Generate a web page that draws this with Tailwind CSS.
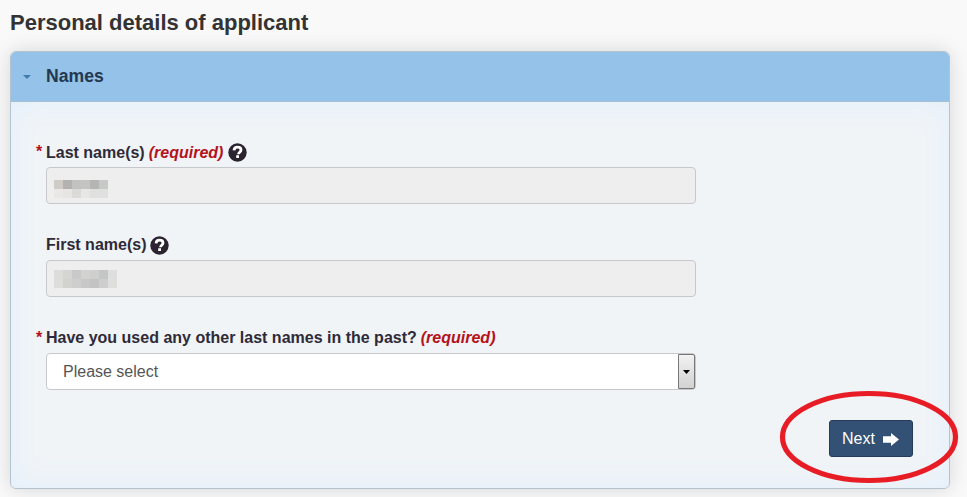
<!DOCTYPE html>
<html lang="en">
<head>
  <meta charset="UTF-8" />
  <meta name="viewport" content="width=device-width, initial-scale=1" />
  <title>Personal details of applicant</title>
  <script src="https://cdn.jsdelivr.net/npm/@tailwindcss/browser@4"></script>
</head>
<body class="h-[497px] overflow-hidden bg-[#f9f9f9] font-['Liberation_Sans',Arial,sans-serif] text-base text-[#2f2a38]">

  <main class="relative h-[497px] pl-2.5 pr-[17px] pt-[9px]">
    <h1 class="h-[42px] text-[22px] leading-7 font-bold text-[#333]">Personal details of applicant</h1>

    <section class="h-[438px] overflow-hidden rounded-md border border-[#b3c3d0] bg-[#f0f4f7] shadow-[0_0_20px_rgba(0,0,0,0.14)]">
      <header class="flex h-[50px] items-center border-b border-[#a5bfd5] bg-[#94c2e8] pl-3">
        <svg class="h-1 w-2" viewBox="0 0 8 4" fill="#3f7cac"><path d="M0 0h8L4 4z" /></svg>
        <h2 class="-mt-0.5 ml-[15px] text-[17.6px] leading-6 font-bold text-[#243850]">Names</h2>
      </header>

      <form class="h-[386px] pt-[38px] pr-9 pl-[35px] shadow-[inset_0_0_30px_#e3effc]">
        <div class="h-[93px]">
          <label class="-ml-2.5 flex h-[27px] items-start leading-6 font-bold">
            <span class="w-2.5 text-[#b5121b]">*</span>
            <span class="mt-px">Last name(s)</span>
            <em class="mt-px ml-1 text-[#b5121b]">(required)</em>
            <svg class="mt-[3px] ml-[5px] size-[19px]" viewBox="0 0 19 19"><circle cx="9.5" cy="9.5" r="9.2" fill="#2b2430" /><path d="M6 7.3C6.2 5 7.6 4.2 9.5 4.2c2.1 0 3.5 1 3.5 2.8 0 2.3-2.5 2.2-2.5 4.2" fill="none" stroke="#fff" stroke-width="2.8" /><path d="M8.2 12.3H11V15H8.2z" fill="#fff" /></svg>
          </label>
          <div class="h-[37px] w-[650px] rounded border border-[#c6c8cc] bg-[#eee] pt-3 pl-[7px]">
            <div class="grid w-[54px] grid-cols-6">
              <i class="h-[9px] bg-[#cfccc8]"></i><i class="h-[9px] bg-[#b3b2b1]"></i><i class="h-[9px] bg-[#c2c3c1]"></i><i class="h-[9px] bg-[#c4c5c3]"></i><i class="h-[9px] bg-[#b4b5b4]"></i><i class="h-[9px] bg-[#c6c9c6]"></i>
              <i class="h-[9px] bg-[#e9e8e6]"></i><i class="h-[9px] bg-[#e6e5e3]"></i><i class="h-[9px] bg-[#dadad7]"></i><i class="h-[9px] bg-[#e7e7e6]"></i><i class="h-[9px] bg-[#e0e1df]"></i><i class="h-[9px] bg-[#dfe0df]"></i>
            </div>
          </div>
        </div>

        <div class="h-[93px]">
          <label class="flex h-[27px] items-start leading-6 font-bold">
            <span>First name(s)</span>
            <svg class="mt-[3px] ml-1 size-[19px]" viewBox="0 0 19 19"><circle cx="9.5" cy="9.5" r="9.2" fill="#2b2430" /><path d="M6 7.3C6.2 5 7.6 4.2 9.5 4.2c2.1 0 3.5 1 3.5 2.8 0 2.3-2.5 2.2-2.5 4.2" fill="none" stroke="#fff" stroke-width="2.8" /><path d="M8.2 12.3H11V15H8.2z" fill="#fff" /></svg>
          </label>
          <div class="h-[37px] w-[650px] rounded border border-[#c6c8cc] bg-[#eee] pt-[9px] pl-[7px]">
            <div class="grid w-[63px] grid-cols-7">
              <i class="h-[9px] bg-[#dcdcda]"></i><i class="h-[9px] bg-[#d5d6d4]"></i><i class="h-[9px] bg-[#c8c9c8]"></i><i class="h-[9px] bg-[#d2d3d1]"></i><i class="h-[9px] bg-[#cfd0ce]"></i><i class="h-[9px] bg-[#c4c5c5]"></i><i class="h-[9px] bg-[#dddedd]"></i>
              <i class="h-[9px] bg-[#dddddb]"></i><i class="h-[9px] bg-[#d2d2cf]"></i><i class="h-[9px] bg-[#cecfcc]"></i><i class="h-[9px] bg-[#c7c8c7]"></i><i class="h-[9px] bg-[#c2c3c2]"></i><i class="h-[9px] bg-[#cdcecd]"></i><i class="h-[9px] bg-[#dededd]"></i>
            </div>
          </div>
        </div>

        <div class="h-[94px]">
          <label class="-ml-2.5 flex h-[27px] items-start leading-6 font-bold">
            <span class="w-2.5 text-[#b5121b]">*</span>
            <span>Have you used any other last names in the past?</span>
            <em class="ml-1 text-[#b5121b]">(required)</em>
          </label>
          <div class="flex h-[37px] w-[650px] items-center justify-between rounded border border-[#c6c8cc] bg-white pl-4">
            <span class="text-[#555]">Please select</span>
            <span class="flex h-[35px] w-[17px] items-center justify-center rounded-r-[2px] border border-[#777] bg-linear-to-b from-[#f2f2f2] to-[#d2d2d2]">
              <svg class="h-1 w-[7px]" viewBox="0 0 7 4"><path d="M0 0h7L3.5 4z" /></svg>
            </span>
          </div>
        </div>

        <button type="button" class="ml-auto flex h-[37px] w-[84px] items-center rounded-[3px] border border-[#243c59] bg-[#335075] pl-3 text-white">
          <span>Next</span>
          <svg class="mt-0.5 ml-[8px] h-[13px] w-4" viewBox="0 0 16 13" fill="#fff"><path d="M0 3.3h8V0L16 6.5 8 13V9.7H0z" /></svg>
        </button>
      </form>
    </section>

    <!-- highlight ring over the Next button -->
    <svg class="absolute top-[388px] left-[777px] h-[98px] w-[184px]" viewBox="0 0 184 98" fill="none"><ellipse cx="92" cy="49" rx="86.5" ry="43.5" stroke="#e81c25" stroke-width="5.2" /></svg>
  </main>

</body>
</html>
